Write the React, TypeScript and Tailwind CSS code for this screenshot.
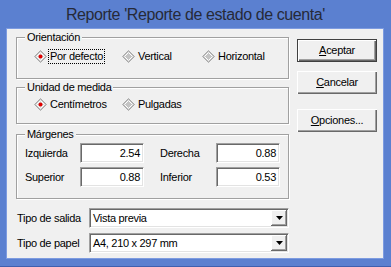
const font = "font-['Liberation_Sans',Arial,sans-serif] text-[11px] tracking-[-0.3px] text-black";

function Radio({ checked }: { checked?: boolean }) {
  return (
    <svg width="13" height="13" viewBox="0 0 13 13" className="shrink-0">
      <polygon points="6.5,0.5 12.5,6.5 6.5,12.5 0.5,6.5" fill="#c0c0c0" stroke="#a8a8a8" />
      <polygon points="6.5,2.5 10.5,6.5 6.5,10.5 2.5,6.5" fill={checked ? '#dedede' : '#c4c4c4'} stroke="#ffffff" />
      {checked && <circle cx="6.5" cy="6.5" r="2" fill="#e00000" />}
    </svg>
  );
}

function Option({ label, checked, focus, width }: { label: string; checked?: boolean; focus?: boolean; width: string }) {
  return (
    <div className={`flex items-center gap-[2px] ${width}`}>
      <Radio checked={checked} />
      <span className={`px-[1px] leading-[13px] ${focus ? 'outline outline-1 outline-dotted outline-black' : ''}`}>{label}</span>
    </div>
  );
}

function Group({ title, className, children }: { title: string; className: string; children: React.ReactNode }) {
  return (
    <div className={`relative border border-[#a0a0a0] shadow-[inset_1px_1px_0_#fff,1px_1px_0_#fff] ${className}`}>
      <span className="absolute left-[8px] top-[-8px] bg-[#f0f0f0] px-[2px] leading-[14px]">{title}</span>
      {children}
    </div>
  );
}

function NumInput({ value }: { value: string }) {
  return (
    <div className="flex h-[20px] w-[64px] items-center justify-end border border-t-[#a0a0a0] border-l-[#a0a0a0] border-b-white border-r-white bg-white pr-[3px] shadow-[inset_1px_1px_0_#696969,inset_-1px_-1px_0_#e3e3e3]">
      {value}
    </div>
  );
}

function Select({ value }: { value: string }) {
  return (
    <div className="flex h-[20px] w-[200px] items-center border border-t-[#a0a0a0] border-l-[#a0a0a0] border-b-white border-r-white bg-white shadow-[inset_1px_1px_0_#696969,inset_-1px_-1px_0_#e3e3e3]">
      <span className="flex-1 pl-[3px]">{value}</span>
      <div className="mr-[1px] flex h-[16px] w-[16px] items-center justify-center bg-[#f0f0f0] shadow-[inset_-1px_-1px_0_#696969,inset_1px_1px_0_#fff,inset_-2px_-2px_0_#a0a0a0]">
        <svg width="7" height="4" viewBox="0 0 7 4">
          <polygon points="0,0 7,0 3.5,4" fill="#000" />
        </svg>
      </div>
    </div>
  );
}

function Button({ label, accel, isDefault }: { label: string; accel: string; isDefault?: boolean }) {
  const rest = label.slice(1);
  return (
    <div
      className={`flex h-[23px] w-[80px] items-center justify-center bg-[#f0f0f0] ${
        isDefault
          ? 'border border-[#404040] shadow-[inset_1px_1px_0_#fff,inset_-1px_-1px_0_#696969,inset_-2px_-2px_0_#a0a0a0]'
          : 'shadow-[inset_1px_1px_0_#fff,inset_-1px_-1px_0_#696969,inset_-2px_-2px_0_#a0a0a0]'
      }`}
    >
      <span>
        <span className="underline underline-offset-1">{accel}</span>
        {rest}
      </span>
    </div>
  );
}

export default function App() {
  return (
    <div className={`flex h-[267px] w-[391px] flex-col border-b border-b-[#3f5fae] bg-[#5b80d0] ${font}`}>
      <div className="flex h-[29px] items-center justify-center pt-[1px] text-[16px] tracking-[-0.4px] text-[#262a38]">
        Reporte 'Reporte de estado de cuenta'
      </div>
      <div className="mx-[7px] mr-[8px] flex h-[229px] gap-[8px] bg-[#f0f0f0] pl-[9px] pr-[7px] pt-[8px] shadow-[0_0_0_1px_#7d9be0]">
        <div className="flex w-[273px] flex-col">
          <Group title="Orientación" className="h-[42px]">
            <div className="flex pl-[17px] pt-[12px]">
              <Option label="Por defecto" checked focus width="w-[88px]" />
              <Option label="Vertical" width="w-[80px]" />
              <Option label="Horizontal" width="w-[80px]" />
            </div>
          </Group>
          <Group title="Unidad de medida" className="mt-[8px] h-[37px]">
            <div className="flex pl-[17px] pt-[10px]">
              <Option label="Centímetros" checked width="w-[88px]" />
              <Option label="Pulgadas" width="w-[80px]" />
            </div>
          </Group>
          <Group title="Márgenes" className="mt-[10px] h-[65px]">
            <div className="grid grid-cols-[55px_80px_56px_64px] items-center gap-y-[4px] pl-[8px] pt-[8px]">
              <span>Izquierda</span>
              <NumInput value="2.54" />
              <span>Derecha</span>
              <NumInput value="0.88" />
              <span>Superior</span>
              <NumInput value="0.88" />
              <span>Inferior</span>
              <NumInput value="0.53" />
            </div>
          </Group>
          <div className="mt-[9px] grid grid-cols-[72px_200px] items-center gap-y-[5px] pl-[1px]">
            <span>Tipo de salida</span>
            <Select value="Vista previa" />
            <span>Tipo de papel</span>
            <Select value="A4, 210 x 297 mm" />
          </div>
        </div>
        <div className="flex flex-col pt-[2px]">
          <Button label="Aceptar" accel="A" isDefault />
          <div className="mt-[9px]">
            <Button label="Cancelar" accel="C" />
          </div>
          <div className="mt-[15px]">
            <Button label="Opciones..." accel="O" />
          </div>
        </div>
      </div>
    </div>
  );
}
